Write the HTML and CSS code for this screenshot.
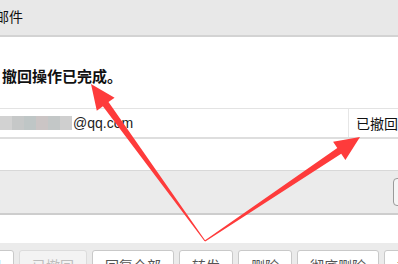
FILE: index.html
```html
<!DOCTYPE html>
<html lang="zh-CN">
<head>
<meta charset="utf-8">
<title>撤回邮件</title>
<link rel="stylesheet" href="styles.css">
</head>
<body>
<div class="page">
  <div class="header"><span class="title">邮件</span></div>
  <div class="notice">撤回操作已完成。</div>
  <div class="row">
    <div class="cell email">
      <span class="mask">
        <i class="m1"></i><i class="m2"></i><i class="m3"></i><i class="m4"></i><i class="m5"></i><i class="m6"></i>
      </span>
      <span class="addr">@qq.com</span>
    </div>
    <div class="cell status">已撤回</div>
  </div>
  <div class="toolbar"><span class="tbtn"></span></div>
  <div class="actions">
    <span class="btn">返回</span>
    <span class="btn disabled">已撤回</span>
    <span class="btn">回复全部</span>
    <span class="btn">转发</span>
    <span class="btn">删除</span>
    <span class="btn">彻底删除</span>
    <span class="btn">标记为</span>
  </div>
  <svg class="arrows" width="398" height="264" viewBox="0 0 398 264" xmlns="http://www.w3.org/2000/svg">
    <polygon fill="#fe3b3b" points="91,84 114.6,97.7 108.5,102.1 205.4,240.7 204.6,241.3 102.9,106.3 96.8,110.7"/>
    <polygon fill="#fe3b3b" points="360,137 345.4,160 341.2,153.8 205.3,241.4 204.7,240.6 337.3,148 333.1,141.8"/>
  </svg>
</div>
</body>
</html>
```

FILE: styles.css
```css
html, body {
  margin: 0;
  padding: 0;
  background: #ffffff;
}
body {
  width: 398px;
  height: 264px;
  overflow: hidden;
  font-family: "Noto Sans CJK SC", "Liberation Sans", sans-serif;
  color: #000;
}
.page {
  position: relative;
  width: 398px;
  height: 264px;
  overflow: hidden;
}
.header {
  height: 35px;
  box-sizing: border-box;
  padding-top: 7px;
  background: #e8e8e8;
  border-bottom: 2px solid #d3d3d3;
  height: 37px;
}
.title {
  display: block;
  margin-left: -5px;
  font-size: 14px;
  line-height: 18px;
  color: #111;
}
.notice {
  height: 71px;
  box-sizing: border-box;
  padding: 29px 0 0 2px;
  font-size: 15px;
  line-height: 20px;
  font-weight: bold;
  color: #111;
}
.row {
  display: flex;
  height: 31px;
  box-sizing: border-box;
  border-top: 1px solid #e3e3e3;
  border-bottom: 2px solid #dedede;
}
.cell {
  display: flex;
  align-items: center;
  font-family: "Liberation Sans", "Noto Sans CJK SC", sans-serif;
  font-size: 14px;
  color: #111;
}
.email {
  width: 350px;
  border-right: 1px solid #e6e6e6;
}
.status {
  padding-left: 7px;
  font-family: "Noto Sans CJK SC", sans-serif;
  white-space: nowrap;
}
.mask {
  display: flex;
  height: 14px;
  margin-right: 1px;
  filter: blur(0.6px);
}
.mask i {
  display: block;
  height: 14px;
}
.m1 { width: 12px; background: #d2d2d2; }
.m2 { width: 12px; background: #c6c8c8; }
.m3 { width: 12px; background: #bfc6c6; }
.m4 { width: 12px; background: #cbc5c5; }
.m5 { width: 12px; background: #c3c7c7; }
.m6 { width: 12px; background: #cfcfcf; }
.addr {
  color: #222;
}
.toolbar {
  margin-top: 31px;
  height: 45px;
  box-sizing: border-box;
  background: #ebebeb;
  border-top: 1px solid #d8d8d8;
  border-bottom: 2px solid #cdcdcd;
  display: flex;
  justify-content: flex-end;
  padding-top: 7px;
}
.tbtn {
  display: block;
  width: 60px;
  height: 28px;
  box-sizing: border-box;
  margin-right: -55px;
  border: 1px solid #9a9a9a;
  border-radius: 4px;
  background: #f5f5f5;
}
.actions {
  margin-top: 28px;
  height: 30px;
  background: #ebebeb;
  padding-top: 7px;
  display: flex;
  gap: 5px;
  margin-left: -40px;
  white-space: nowrap;
}
.btn {
  display: block;
  height: 30px;
  box-sizing: border-box;
  padding: 6px 12px 0;
  border: 1px solid #c9c9c9;
  border-radius: 3px;
  background: #ffffff;
  font-size: 14px;
  line-height: 16px;
  color: #555;
  flex: none;
}
.btn.disabled {
  background: #f3f3f3;
  border-color: #dcdcdc;
  color: #bdbdbd;
}
.arrows {
  position: absolute;
  left: 0;
  top: 0;
  pointer-events: none;
}
```
